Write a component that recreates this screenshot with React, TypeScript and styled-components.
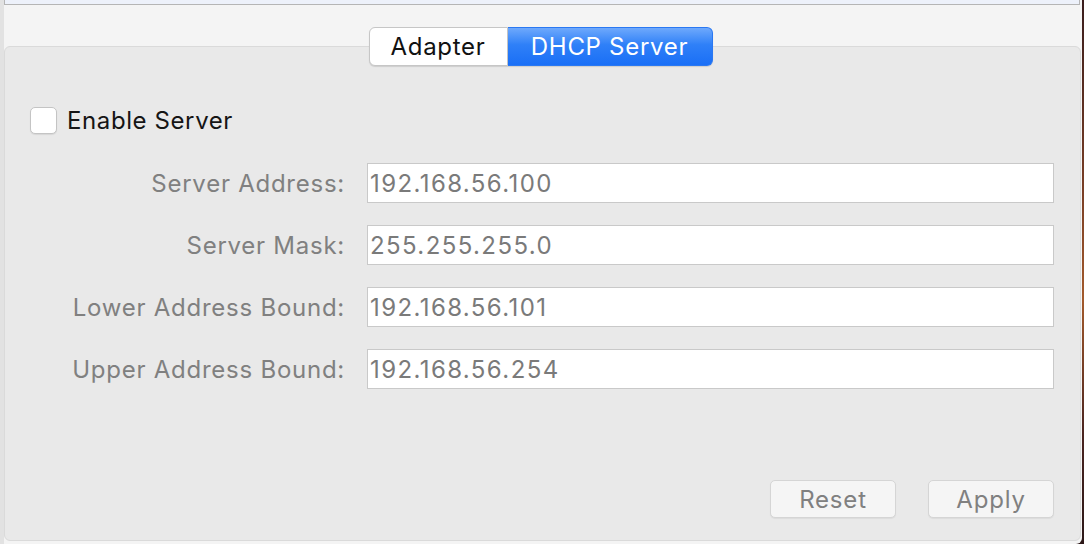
import styled, { createGlobalStyle } from 'styled-components';

/* Global */
const GlobalStyle = createGlobalStyle`
	html, body {
		margin: 0;
		padding: 0;
		height: 544px;
		overflow: hidden;
		background: linear-gradient(180deg, #3a1d1d 0%, #7a3f26 35%, #a35a2c 55%, #4a2420 80%, #2c1818 100%);
	}
	* {
		box-sizing: border-box;
	}
`;

/* Styled Components */
const Window = styled.div`
	width: 1082px;
	height: 544px;
	display: flex;
	flex-direction: column;
	background: #f4f4f4;
	border-left: 4px solid #e2e2e2;
	border-bottom-right-radius: 6px;
	padding-right: 1px;
	font-family: Inter, 'Liberation Sans', sans-serif;
`;

const TopField = styled.div`
	height: 5px;
	margin-right: 1px;
	background: #edf1fa;
	border: 1px solid #b5b5b5;
	border-top: none;
`;

const TabBar = styled.div`
	display: flex;
	justify-content: center;
	margin-top: 22px;
	margin-bottom: -20px;
	padding-right: 4px;
	position: relative;
	z-index: 1;
`;

const Tab = styled.div<{ $active?: boolean; $width: number }>`
	width: ${(p) => p.$width}px;
	height: 39px;
	display: flex;
	align-items: center;
	justify-content: center;
	font-size: 24px;
	letter-spacing: 0.7px;
	color: ${(p) => (p.$active ? '#ffffff' : '#111111')};
	background: ${(p) => (p.$active ? 'linear-gradient(180deg, #6ea9fc 0%, #2f80f8 45%, #1a6ff6 100%)' : '#ffffff')};
	border: 1px solid ${(p) => (p.$active ? '#2a78f2' : '#c6c6c6')};
	border-radius: ${(p) => (p.$active ? '0 6px 6px 0' : '6px 0 0 6px')};
	border-left: ${(p) => (p.$active ? 'none' : undefined)};
	box-shadow: 0 1px 1px rgba(0, 0, 0, 0.12);
`;

const Panel = styled.div`
	flex: 1;
	display: flex;
	flex-direction: column;
	margin-bottom: 3px;
	background: #e9e9e9;
	border: 1px solid #dadada;
	border-radius: 6px;
	padding: 59px 26px 22px 25px;
`;

const CheckRow = styled.label`
	display: flex;
	align-items: center;
	gap: 10px;
	font-size: 24px;
	letter-spacing: 0.6px;
	color: #151515;
`;

const CheckBox = styled.span`
	width: 27px;
	height: 27px;
	background: #ffffff;
	border: 1px solid #c4c4c4;
	border-radius: 5px;
	box-shadow: 0 1px 1px rgba(0, 0, 0, 0.08);
`;

const FormGrid = styled.div`
	display: grid;
	grid-template-columns: 315px 1fr;
	column-gap: 22px;
	row-gap: 22px;
	margin-top: 28px;
`;

const Label = styled.div`
	height: 40px;
	display: flex;
	align-items: center;
	justify-content: flex-end;
	font-size: 24px;
	letter-spacing: 0.75px;
	color: #808080;
`;

const Field = styled.div`
	height: 40px;
	display: flex;
	align-items: center;
	padding-left: 2px;
	background: #ffffff;
	border: 1px solid #c9c9c9;
	font-size: 24px;
	letter-spacing: 1.4px;
	color: #7a7a7a;
`;

const ButtonRow = styled.div`
	margin-top: auto;
	display: flex;
	justify-content: flex-end;
	gap: 32px;
`;

const Button = styled.button`
	width: 126px;
	height: 38px;
	background: #f5f5f5;
	border: 1px solid #d5d5d5;
	border-radius: 5px;
	font-family: inherit;
	font-size: 24px;
	letter-spacing: 0.8px;
	color: #808080;
	box-shadow: 0 1px 1px rgba(0, 0, 0, 0.06);
`;

const fields = [
	{ label: 'Server Address:', value: '192.168.56.100' },
	{ label: 'Server Mask:', value: '255.255.255.0' },
	{ label: 'Lower Address Bound:', value: '192.168.56.101' },
	{ label: 'Upper Address Bound:', value: '192.168.56.254' },
];

export default function App() {
	return (
		<>
			<GlobalStyle />
			<Window>
				<TopField />
				<TabBar>
					<Tab $width={139}>Adapter</Tab>
					<Tab $width={205} $active>
						DHCP Server
					</Tab>
				</TabBar>
				<Panel>
					<CheckRow>
						<CheckBox />
						Enable Server
					</CheckRow>
					<FormGrid>
						{fields.map((f) => (
							<>
								<Label key={f.label}>{f.label}</Label>
								<Field key={f.value}>{f.value}</Field>
							</>
						))}
					</FormGrid>
					<ButtonRow>
						<Button>Reset</Button>
						<Button>Apply</Button>
					</ButtonRow>
				</Panel>
			</Window>
		</>
	);
}
